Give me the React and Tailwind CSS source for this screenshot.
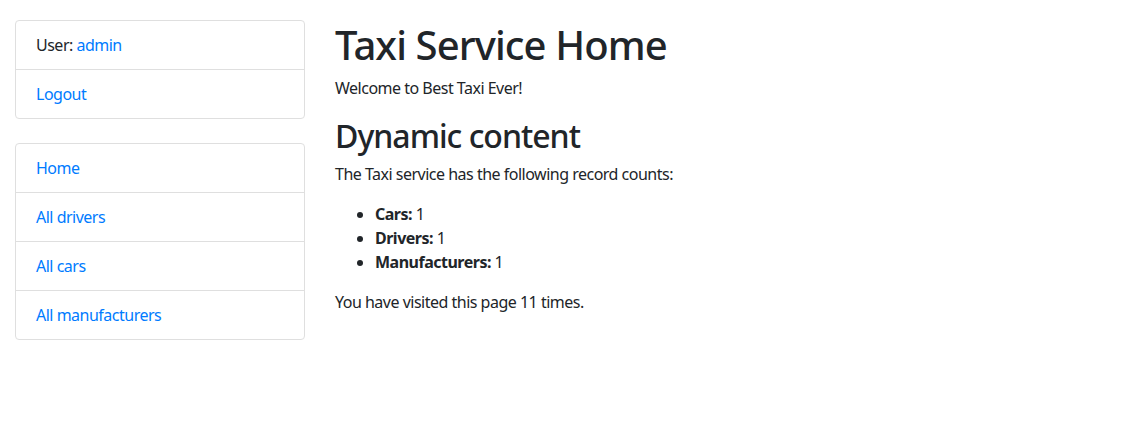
export default function App() {
  return (
    <div className="min-h-[447px] bg-white text-[#212529] text-[16px] leading-[24px] tracking-[-0.5px]" style={{ fontFamily: '"Noto Sans", "Open Sans", sans-serif' }}>
      <div className="flex pt-[20px]">
        <div className="w-[320px] shrink-0 px-[15px]">
          <ul className="mb-[24px] rounded-[4px] border border-[#dfdfdf]">
            <li className="border-b border-[#dfdfdf] px-[20px] py-[12px]">
              User: <a className="text-[#007bff]" href="#">admin</a>
            </li>
            <li className="px-[20px] py-[12px]">
              <a className="text-[#007bff]" href="#">Logout</a>
            </li>
          </ul>
          <ul className="rounded-[4px] border border-[#dfdfdf]">
            <li className="border-b border-[#dfdfdf] px-[20px] py-[12px]">
              <a className="text-[#007bff]" href="#">Home</a>
            </li>
            <li className="border-b border-[#dfdfdf] px-[20px] py-[12px]">
              <a className="text-[#007bff]" href="#">All drivers</a>
            </li>
            <li className="border-b border-[#dfdfdf] px-[20px] py-[12px]">
              <a className="text-[#007bff]" href="#">All cars</a>
            </li>
            <li className="px-[20px] py-[12px]">
              <a className="text-[#007bff]" href="#">All manufacturers</a>
            </li>
          </ul>
        </div>
        <div className="flex-1 px-[15px]">
          <h1 className="mb-[8px] pt-[2px] text-[40px] font-medium leading-[46px] tracking-[-0.9px]">Taxi Service Home</h1>
          <p className="mb-[16px]">Welcome to Best Taxi Ever!</p>
          <h2 className="mb-[8px] pt-[2px] text-[32px] font-medium leading-[36.4px] tracking-[-1px]">Dynamic content</h2>
          <p className="mb-[16px]">The Taxi service has the following record counts:</p>
          <ul className="mb-[16px] list-disc pl-[40px]">
            <li><b className="font-bold">Cars:</b> 1</li>
            <li><b className="font-bold">Drivers:</b> 1</li>
            <li><b className="font-bold">Manufacturers:</b> 1</li>
          </ul>
          <p className="mb-[16px]">You have visited this page 11 times.</p>
        </div>
      </div>
    </div>
  );
}
